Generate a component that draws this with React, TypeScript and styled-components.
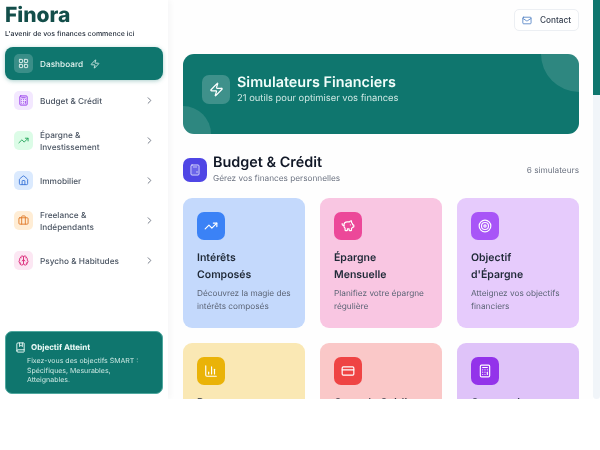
import React from "react";
import styled, { createGlobalStyle } from "styled-components";
import {
  LayoutGrid, Zap, Calculator, TrendingUp, House, Briefcase, Brain, ChevronRight,
  BookMarked, Mail, PiggyBank, Target, ChartColumn, CreditCard,
} from "lucide-react";

const Global = createGlobalStyle`
  html, body { margin: 0; padding: 0; background: #fff; }
  body { font-family: Inter, "Liberation Sans", sans-serif; text-rendering: geometricPrecision; }
  * { box-sizing: border-box; }
`;

const Shell = styled.div`
  display: flex;
  height: 399px;
  overflow: hidden;
  background: #fff;
  filter: blur(0.3px);
`;

const Sidebar = styled.aside`
  width: 168px;
  flex: none;
  display: flex;
  flex-direction: column;
  padding: 0 5px 5px;
  background: #fff;
  box-shadow: 2px 0 6px rgba(15, 23, 42, 0.04);
  z-index: 1;
`;

const Brand = styled.h1`
  margin: 2px 0 0;
  font-size: 21px;
  line-height: 27px;
  font-weight: 800;
  color: #134e4a;
`;

const Tagline = styled.p`
  margin: 0;
  font-size: 7px;
  line-height: 9px;
  font-weight: 500;
  color: #1f2937;
`;

const Nav = styled.nav`
  display: flex;
  flex-direction: column;
  gap: 4px;
  margin-top: 9px;
`;

const NavItem = styled.div<{ $active?: boolean }>`
  display: flex;
  align-items: center;
  gap: 7px;
  padding: 7px 9px;
  border-radius: 8px;
  background: ${(p) => (p.$active ? "#0f766e" : "transparent")};
  color: ${(p) => (p.$active ? "#e6f4f1" : "#4b5563")};
  box-shadow: ${(p) => (p.$active ? "0 1px 4px rgba(15,118,110,.35)" : "none")};
`;

const NavIcon = styled.span<{ $bg: string; $fg: string }>`
  width: 19px;
  height: 19px;
  flex: none;
  display: flex;
  align-items: center;
  justify-content: center;
  border-radius: 5px;
  background: ${(p) => p.$bg};
  color: ${(p) => p.$fg};
`;

const NavLabel = styled.span`
  padding-top: 2px;
  font-size: 8.25px;
  line-height: 11.5px;
  font-weight: 500;
  max-width: 72px;
`;

const WideLabel = styled(NavLabel)`
  max-width: 90px;
  white-space: nowrap;
`;

const Chevron = styled(ChevronRight)`
  margin-left: auto;
  color: #6b7280;
  margin-right: -1px;
`;

const Tip = styled.div`
  margin-top: auto;
  background: #0f766e;
  border: 1px solid #4fa89f;
  border-radius: 7px;
  padding: 9px 9px;
  height: 63px;
  color: #fff;
`;

const TipHead = styled.div`
  display: flex;
  align-items: center;
  gap: 5px;
  font-size: 8px;
  line-height: 12px;
  font-weight: 700;
  color: #f0fdfa;
`;

const TipText = styled.p`
  margin: 3px 0 0 12px;
  font-size: 7px;
  line-height: 9.5px;
  color: #cce8e3;
`;

const Main = styled.main`
  flex: 1;
  min-width: 0;
  overflow: hidden;
  background: #fefefe;
`;

const Scrollbar = styled.div`
  width: 7px;
  flex: none;
  background: #f1f5f9;
  border-radius: 0 0 4px 4px;
`;

const ScrollThumb = styled.div`
  height: 95px;
  background: #0f766e;
`;

const Content = styled.div`
  padding: 9px 14px 14px 15px;
`;

const TopBar = styled.div`
  display: flex;
  justify-content: flex-end;
`;

const ContactBtn = styled.button`
  display: flex;
  align-items: center;
  gap: 8px;
  height: 22px;
  width: 65px;
  padding: 0 7px;
  border: 1px solid #eceff3;
  border-radius: 5px;
  background: #fff;
  font: 500 8.25px Inter, sans-serif;
  color: #374151;
  svg { color: #4f7fc4; }
`;

const Hero = styled.section`
  position: relative;
  overflow: hidden;
  height: 80px;
  margin-top: 23px;
  border-radius: 11px;
  background: #0f766e;
  display: flex;
  align-items: flex-start;
  gap: 7px;
  padding: 21px 19px;
`;

const HeroBlobTop = styled.span`
  position: absolute;
  top: -38px;
  right: -38px;
  width: 76px;
  height: 76px;
  border-radius: 50%;
  background: rgba(255, 255, 255, 0.13);
`;

const HeroBlobBottom = styled.span`
  position: absolute;
  bottom: -28px;
  left: -28px;
  width: 56px;
  height: 56px;
  border-radius: 50%;
  background: rgba(255, 255, 255, 0.13);
`;

const HeroIcon = styled.div`
  width: 28px;
  height: 29px;
  flex: none;
  display: flex;
  align-items: center;
  justify-content: center;
  border-radius: 7px;
  background: rgba(255, 255, 255, 0.2);
  color: #fff;
`;

const HeroTitle = styled.h2`
  margin: 0;
  font-size: 14.4px;
  line-height: 15px;
  font-weight: 600;
  color: #f0fdfa;
`;

const HeroSub = styled.p`
  margin: 3px 0 0;
  font-size: 9.4px;
  line-height: 12px;
  color: #cfe8e4;
`;

const SectionHead = styled.div`
  display: flex;
  align-items: center;
  gap: 6px;
  margin-top: 21px;
`;

const SectionIcon = styled.div`
  width: 24px;
  height: 24px;
  flex: none;
  display: flex;
  align-items: center;
  justify-content: center;
  border-radius: 7px;
  background: #4f46e5;
  color: #dcdcfb;
`;

const SectionTitle = styled.h3`
  margin: 0;
  font-size: 14.4px;
  line-height: 15px;
  font-weight: 600;
  color: #111827;
`;

const SectionSub = styled.p`
  margin: 3px 0 0;
  font-size: 8.25px;
  line-height: 11px;
  color: #6b7280;
`;

const SectionCount = styled.span`
  margin-left: auto;
  font-size: 8.25px;
  line-height: 10px;
  color: #6b7280;
`;

const Grid = styled.div`
  display: grid;
  grid-template-columns: repeat(3, 122px);
  justify-content: space-between;
  gap: 15px;
  margin-top: 14px;
`;

const Card = styled.article<{ $bg: string }>`
  height: 130px;
  padding: 14px 12px 14px 14px;
  border-radius: 9px;
  background: ${(p) => p.$bg};
`;

const CardIcon = styled.div<{ $bg: string }>`
  width: 28px;
  height: 28px;
  display: flex;
  align-items: center;
  justify-content: center;
  border-radius: 7px;
  background: ${(p) => p.$bg};
  color: #fff;
`;

const CardTitle = styled.h4`
  margin: 10px 0 0;
  font-size: 10.5px;
  line-height: 16.5px;
  font-weight: 600;
  color: #1f2937;
`;

const CardText = styled.p`
  margin: 3.5px 0 0;
  font-size: 8.25px;
  line-height: 13.5px;
  color: #5b6475;
`;

const nav = [
  { label: "Budget & Crédit", icon: Calculator, bg: "#f3e8ff", fg: "#9333ea" },
  { label: "Épargne & Investissement", icon: TrendingUp, bg: "#dcfce7", fg: "#22a35a" },
  { label: "Immobilier", icon: House, bg: "#dbeafe", fg: "#3b76d8" },
  { label: "Freelance & Indépendants", icon: Briefcase, bg: "#ffedd5", fg: "#e07b2a" },
  { label: "Psycho & Habitudes", icon: Brain, bg: "#fce7f3", fg: "#db2777", wide: true },
];

const cards = [
  { title: ["Intérêts", "Composés"], text: "Découvrez la magie des intérêts composés", bg: "#c4d9fc", ic: "#3b82f6", icon: TrendingUp },
  { title: ["Épargne", "Mensuelle"], text: "Planifiez votre épargne régulière", bg: "#f9c6e2", ic: "#ec4899", icon: PiggyBank },
  { title: ["Objectif", "d'Épargne"], text: "Atteignez vos objectifs financiers", bg: "#e6cbfc", ic: "#a855f7", icon: Target },
  { title: ["Revenus et", "Dépenses"], text: "Suivez vos dépenses mensuelles", bg: "#fae8b4", ic: "#eab308", icon: ChartColumn },
  { title: ["Carte de Crédit", ""], text: "Maîtrisez votre carte de crédit", bg: "#fac8c8", ic: "#ef4444", icon: CreditCard },
  { title: ["Comparaison", "de Prêts"], text: "Comparez vos offres de crédit", bg: "#dfc3f9", ic: "#9333ea", icon: Calculator },
];

export default function App() {
  return (
    <Shell>
      <Global />
      <Sidebar>
        <Brand>Finora</Brand>
        <Tagline>L'avenir de vos finances commence ici</Tagline>
        <Nav>
          <NavItem $active>
            <NavIcon $bg="rgba(255,255,255,.18)" $fg="#e6f4f1"><LayoutGrid size={11} /></NavIcon>
            <NavLabel>Dashboard</NavLabel>
            <Zap size={10} />
          </NavItem>
          {nav.map(({ label, icon: Icon, bg, fg, wide }) => {
            const Label = wide ? WideLabel : NavLabel;
            return (
              <NavItem key={label}>
                <NavIcon $bg={bg} $fg={fg}><Icon size={11} /></NavIcon>
                <Label>{label}</Label>
                <Chevron size={11} />
              </NavItem>
            );
          })}
        </Nav>
        <Tip>
          <TipHead><BookMarked size={11} />Objectif Atteint</TipHead>
          <TipText>Fixez-vous des objectifs SMART : Spécifiques, Mesurables, Atteignables.</TipText>
        </Tip>
      </Sidebar>
      <Main>
        <Content>
          <TopBar>
            <ContactBtn><Mail size={11} />Contact</ContactBtn>
          </TopBar>
          <Hero>
            <HeroBlobTop />
            <HeroBlobBottom />
            <HeroIcon><Zap size={15} /></HeroIcon>
            <div>
              <HeroTitle>Simulateurs Financiers</HeroTitle>
              <HeroSub>21 outils pour optimiser vos finances</HeroSub>
            </div>
          </Hero>
          <SectionHead>
            <SectionIcon><Calculator size={12} /></SectionIcon>
            <div>
              <SectionTitle>Budget &amp; Crédit</SectionTitle>
              <SectionSub>Gérez vos finances personnelles</SectionSub>
            </div>
            <SectionCount>6 simulateurs</SectionCount>
          </SectionHead>
          <Grid>
            {cards.map(({ title, text, bg, ic, icon: Icon }) => (
              <Card key={title[0]} $bg={bg}>
                <CardIcon $bg={ic}><Icon size={14} /></CardIcon>
                <CardTitle>{title[0]}<br />{title[1]}</CardTitle>
                <CardText>{text}</CardText>
              </Card>
            ))}
          </Grid>
        </Content>
      </Main>
      <Scrollbar><ScrollThumb /></Scrollbar>
    </Shell>
  );
}
